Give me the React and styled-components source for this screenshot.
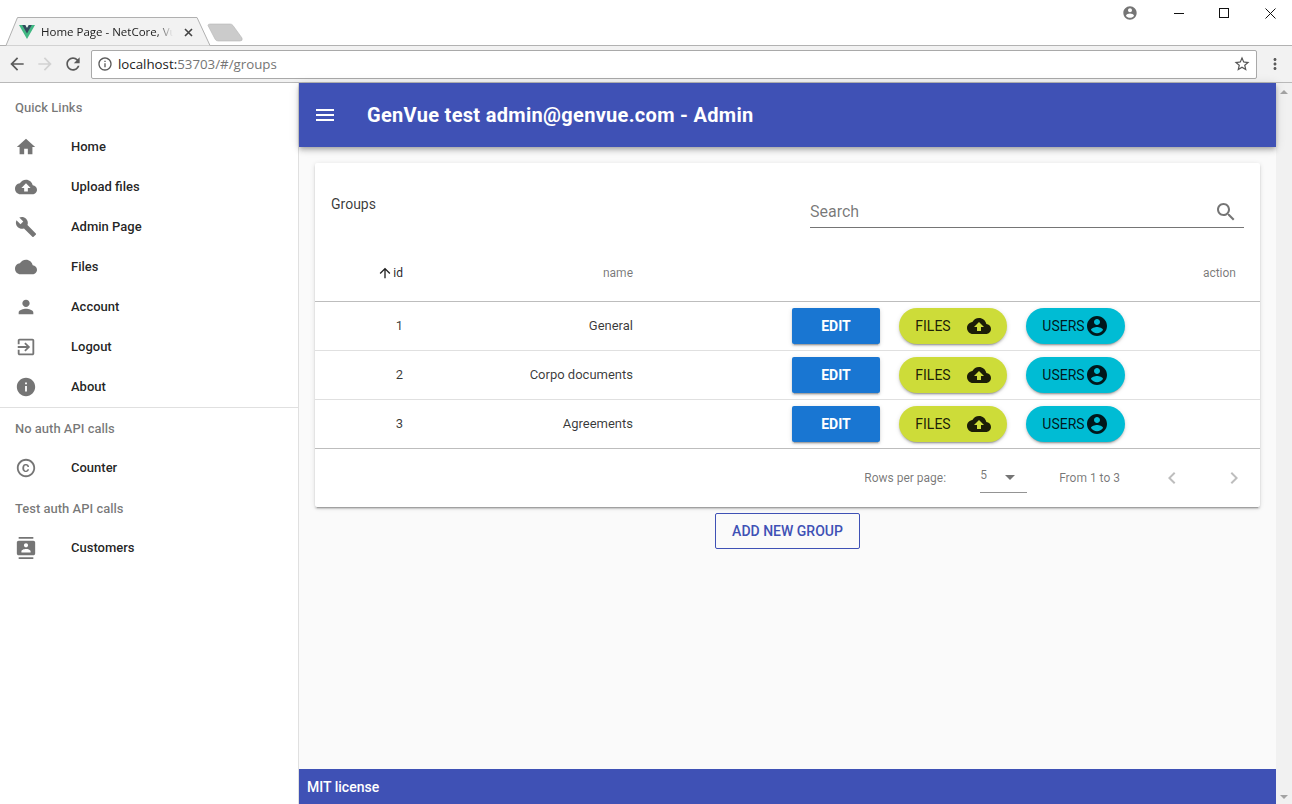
import React from 'react';
import styled, { createGlobalStyle } from 'styled-components';

const Global = createGlobalStyle`
  html, body { margin: 0; padding: 0; height: 100%; overflow: hidden; background: #fff; }
  body { font-family: Roboto, "Liberation Sans", sans-serif; }
  * { box-sizing: border-box; }
`;

const P = {
  home: 'M10 20v-6h4v6h5v-8h3L12 3 2 12h3v8z',
  upload: 'M19.35 10.04C18.67 6.59 15.64 4 12 4 9.11 4 6.6 5.64 5.35 8.04 2.34 8.36 0 10.91 0 14c0 3.31 2.69 6 6 6h13c2.76 0 5-2.24 5-5 0-2.64-2.05-4.78-4.65-4.96zM14 13v4h-4v-4H7l5-5 5 5h-3z',
  build: 'M22.7 19l-9.1-9.1c.9-2.3.4-5-1.5-6.9-2-2-5-2.4-7.4-1.3L9 6 6 9 1.6 4.7C.4 7.1.9 10.1 2.9 12.1c1.9 1.9 4.6 2.4 6.9 1.5l9.1 9.1c.4.4 1 .4 1.4 0l2.3-2.3c.5-.4.5-1.1.1-1.4z',
  cloud: 'M19.35 10.04C18.67 6.59 15.64 4 12 4 9.11 4 6.6 5.64 5.35 8.04 2.34 8.36 0 10.91 0 14c0 3.31 2.69 6 6 6h13c2.76 0 5-2.24 5-5 0-2.64-2.05-4.78-4.65-4.96z',
  person: 'M12 12c2.21 0 4-1.79 4-4s-1.79-4-4-4-4 1.79-4 4 1.79 4 4 4zm0 2c-2.67 0-8 1.34-8 4v2h16v-2c0-2.66-5.33-4-8-4z',
  exit: 'M10.09 15.59L11.5 17l5-5-5-5-1.41 1.41L12.67 11H3v2h9.67l-2.58 2.59zM19 3H5c-1.11 0-2 .9-2 2v4h2V5h14v14H5v-4H3v4c0 1.1.89 2 2 2h14c1.1 0 2-.9 2-2V5c0-1.1-.9-2-2-2z',
  info: 'M12 2C6.48 2 2 6.48 2 12s4.48 10 10 10 10-4.48 10-10S17.52 2 12 2zm1 15h-2v-6h2v6zm0-8h-2V7h2v2z',
  copyright: 'M10.08 10.86c.05-.33.16-.62.3-.87s.34-.46.59-.62c.24-.15.54-.22.91-.23.23.01.44.05.63.13.2.09.38.21.52.36s.25.33.34.53.13.42.14.64h1.79c-.02-.47-.11-.9-.28-1.29s-.4-.73-.7-1.01-.66-.5-1.08-.66-.88-.23-1.39-.23c-.65 0-1.22.11-1.7.34s-.88.53-1.2.92-.56.84-.71 1.36S8 11.29 8 11.87v.27c0 .58.08 1.12.23 1.64s.39.97.71 1.35.72.69 1.2.91 1.05.34 1.7.34c.47 0 .91-.08 1.32-.23s.77-.36 1.08-.63.56-.58.74-.94.29-.74.3-1.15h-1.79c-.01.21-.06.4-.15.58s-.21.33-.36.46-.32.23-.52.3c-.19.07-.39.09-.6.1-.36-.01-.66-.08-.89-.23-.25-.16-.45-.37-.59-.62s-.25-.55-.3-.88-.08-.67-.08-1v-.27c0-.35.03-.68.08-1.01zM12 2C6.48 2 2 6.48 2 12s4.48 10 10 10 10-4.48 10-10S17.52 2 12 2zm0 18c-4.41 0-8-3.59-8-8s3.59-8 8-8 8 3.59 8 8-3.59 8-8 8z',
  contacts: 'M20 0H4v2h16V0zM4 24h16v-2H4v2zM20 4H4c-1.1 0-2 .9-2 2v12c0 1.1.9 2 2 2h16c1.1 0 2-.9 2-2V6c0-1.1-.9-2-2-2zm-8 2.75c1.24 0 2.25 1.01 2.25 2.25s-1.01 2.25-2.25 2.25S9.75 10.24 9.75 9 10.76 6.75 12 6.75zM17 17H7v-1.5c0-1.67 3.33-2.5 5-2.5s5 .83 5 2.5V17z',
  account: 'M12 2C6.48 2 2 6.48 2 12s4.48 10 10 10 10-4.48 10-10S17.52 2 12 2zm0 3c1.66 0 3 1.34 3 3s-1.34 3-3 3-3-1.34-3-3 1.34-3 3-3zm0 14.2c-2.5 0-4.71-1.28-6-3.22.03-1.99 4-3.08 6-3.08 1.99 0 5.97 1.09 6 3.08-1.29 1.94-3.5 3.22-6 3.22z',
  search: 'M15.5 14h-.79l-.28-.27C15.41 12.59 16 11.11 16 9.5 16 5.91 13.09 3 9.5 3S3 5.91 3 9.5 5.91 16 9.5 16c1.61 0 3.09-.59 4.23-1.57l.27.28v.79l5 4.99L20.49 19l-4.99-5zm-6 0C7.01 14 5 11.99 5 9.5S7.01 5 9.5 5 14 7.01 14 9.5 11.99 14 9.5 14z',
  menu: 'M3 18h18v-2H3v2zm0-5h18v-2H3v2zm0-7v2h18V6H3z',
  arrowUp: 'M4 12l1.41 1.41L11 7.83V20h2V7.83l5.58 5.59L20 12l-8-8-8 8z',
  left: 'M15.41 7.41L14 6l-6 6 6 6 1.41-1.41L10.83 12z',
  right: 'M10 6L8.59 7.41 13.17 12l-4.58 4.59L10 18l6-6z',
  drop: 'M7 10l5 5 5-5z',
  back: 'M20 11H7.83l5.59-5.59L12 4l-8 8 8 8 1.41-1.41L7.83 13H20v-2z',
  forward: 'M12 4l-1.41 1.41L16.17 11H4v2h12.17l-5.58 5.59L12 20l8-8z',
  reload: 'M17.65 6.35C16.2 4.9 14.21 4 12 4c-4.42 0-7.99 3.58-7.99 8s3.57 8 7.99 8c3.73 0 6.84-2.55 7.73-6h-2.08c-.82 2.33-3.04 4-5.65 4-3.31 0-6-2.69-6-6s2.69-6 6-6c1.66 0 3.14.69 4.22 1.78L13 11h7V4l-2.35 2.35z',
  infoOutline: 'M11 7h2v2h-2zm0 4h2v6h-2zm1-9C6.48 2 2 6.48 2 12s4.48 10 10 10 10-4.48 10-10S17.52 2 12 2zm0 18c-4.41 0-8-3.59-8-8s3.59-8 8-8 8 3.59 8 8-3.59 8-8 8z',
  star: 'M22 9.24l-7.19-.62L12 2 9.19 8.63 2 9.24l5.46 4.73L5.82 21 12 17.27 18.18 21l-1.63-7.03L22 9.24zM12 15.4l-3.76 2.27 1-4.28-3.32-2.88 4.38-.38L12 6.1l1.71 4.04 4.38.38-3.32 2.88 1 4.28L12 15.4z',
  dots: 'M12 8c1.1 0 2-.9 2-2s-.9-2-2-2-2 .9-2 2 .9 2 2 2zm0 2c-1.1 0-2 .9-2 2s.9 2 2 2 2-.9 2-2-.9-2-2-2zm0 6c-1.1 0-2 .9-2 2s.9 2 2 2 2-.9 2-2-.9-2-2-2z',
};

const Icon = ({ d, size = 24, color = 'currentColor' }) => (
  <svg width={size} height={size} viewBox="0 0 24 24" fill={color} style={{ display: 'block', flex: 'none' }}>
    <path d={d} fillRule="evenodd" />
  </svg>
);

const Page = styled.div`
  width: 1292px;
  height: 804px;
  display: flex;
  flex-direction: column;
  overflow: hidden;
  background: #fff;
`;

/* ---------- browser chrome ---------- */
const TitleBar = styled.div`
  height: 46px;
  flex: none;
  position: relative;
  display: flex;
  align-items: flex-start;
  justify-content: flex-end;
  border-bottom: 1px solid #b2b2b2;
`;
const TabShape = styled.svg`
  position: absolute;
  left: 0;
  top: 16px;
`;
const TabContent = styled.div`
  position: absolute;
  left: 19px;
  top: 18px;
  width: 176px;
  height: 28px;
  display: flex;
  align-items: center;
`;
const TabTitle = styled.span`
  margin-left: 6px;
  width: 132px;
  flex: none;
  font: 11.5px/16px "Open Sans", "Noto Sans", sans-serif;
  color: #222;
  white-space: nowrap;
  -webkit-mask-image: linear-gradient(to right, #000 88%, transparent 100%);
  mask-image: linear-gradient(to right, #000 88%, transparent 100%);
`;
const TabClose = styled.svg`
  margin-left: 11px;
  flex: none;
`;
const WindowControls = styled.div`
  display: flex;
  align-items: center;
  height: 26px;
  padding-right: 16px;
`;
const UserBubble = styled.div`
  margin-right: 36px;
  color: #757575;
`;
const Win = styled.svg`
  display: block;
  margin-left: ${(p) => p.$gap}px;
`;
const Toolbar = styled.div`
  height: 37px;
  flex: none;
  background: #f2f2f2;
  border-bottom: 1px solid #b9b9b9;
  display: flex;
  align-items: center;
  padding-left: 8px;
`;
const NavIcon = styled.div`
  width: 28px;
  flex: none;
  display: flex;
  justify-content: center;
  margin-left: ${(p) => p.$ml || 0}px;
  color: ${(p) => p.$color || '#5a5a5a'};
`;
const Omnibox = styled.div`
  width: 1166px;
  flex: none;
  height: 29px;
  margin-left: 4px;
  background: #fff;
  border: 1px solid #a9a9a9;
  border-radius: 2px;
  display: flex;
  align-items: center;
  padding: 0 5px;
  color: #5a5a5a;
`;
const Url = styled.div`
  margin-left: 5px;
  flex: 1;
  font: 13.3px "Open Sans", "Noto Sans", sans-serif;
  color: #757575;
  span { color: #222; }
`;

/* ---------- app ---------- */
const Body = styled.div`
  flex: 1;
  min-height: 0;
  display: flex;
`;
const Sidebar = styled.nav`
  width: 299px;
  flex: none;
  background: #fff;
  border-right: 1px solid #e0e0e0;
  padding-top: 5px;
`;
const SubHeader = styled.div`
  height: ${(p) => p.$h}px;
  padding-top: ${(p) => p.$pt || 0}px;
  padding-left: 15px;
  display: flex;
  align-items: center;
  font-size: 13px;
  font-weight: 500;
  color: rgba(0, 0, 0, 0.54);
`;
const NavItem = styled.div`
  height: 40px;
  padding-left: 15px;
  display: flex;
  align-items: center;
  font-size: 13px;
  font-weight: 500;
  color: rgba(0, 0, 0, 0.87);
`;
const NavIconBox = styled.div`
  width: 56px;
  flex: none;
  padding-top: 2px;
  color: rgba(0, 0, 0, 0.54);
`;
const Divider = styled.div`
  height: 1px;
  margin-top: 1px;
  background: #e0e0e0;
`;
const Main = styled.main`
  flex: 1;
  min-width: 0;
  display: flex;
  flex-direction: column;
  background: #fafafa;
`;
const AppBar = styled.header`
  height: 64px;
  flex: none;
  background: #3f51b5;
  color: #fff;
  display: flex;
  align-items: center;
  padding-left: 14px;
  box-shadow: 0 2px 4px -1px rgba(0,0,0,.2), 0 4px 5px 0 rgba(0,0,0,.14), 0 1px 10px 0 rgba(0,0,0,.12);
  position: relative;
`;
const AppTitle = styled.h1`
  margin: 0 0 0 30px;
  font-size: 20px;
  font-weight: 700;
  letter-spacing: 0.31px;
`;
const Content = styled.div`
  flex: 1;
  padding: 16px 16px 0;
  display: flex;
  flex-direction: column;
  align-items: center;
`;
const Card = styled.section`
  width: 945px;
  height: 344px;
  background: #fff;
  border-radius: 2px;
  box-shadow: 0 3px 1px -2px rgba(0,0,0,.2), 0 2px 2px 0 rgba(0,0,0,.14), 0 1px 5px 0 rgba(0,0,0,.12);
  display: flex;
  flex-direction: column;
`;
const CardHead = styled.div`
  height: 80px;
  flex: none;
  display: flex;
  justify-content: space-between;
  padding: 0 16px;
`;
const CardTitle = styled.div`
  font-size: 14px;
  line-height: 20px;
  margin-top: 31px;
  color: rgba(0, 0, 0, 0.78);
`;
const SearchBox = styled.div`
  width: 434px;
  height: 33px;
  margin-top: 32px;
  border-bottom: 1px solid rgba(0, 0, 0, 0.54);
  display: flex;
  align-items: center;
  justify-content: space-between;
  padding-right: 6px;
  font-size: 16px;
  color: rgba(0, 0, 0, 0.54);
`;
const SearchIconBox = styled.div`
  padding-top: 2px;
`;
const Row = styled.div`
  display: grid;
  grid-template-columns: 88px 230px 1fr;
  height: ${(p) => p.$h}px;
  flex: none;
  align-items: center;
  border-bottom: 1px solid ${(p) => p.$line || '#e0e0e0'};
  font-size: 13px;
  color: rgba(0, 0, 0, 0.78);
`;
const HeadRow = styled(Row)`
  font-size: 12px;
  color: rgba(0, 0, 0, 0.54);
  padding-top: 1px;
`;
const Cell = styled.div`
  text-align: right;
  position: relative;
  top: ${(p) => (p.$body ? -1 : 0)}px;
`;
const SortCell = styled.div`
  display: flex;
  justify-content: flex-end;
  align-items: center;
  color: rgba(0, 0, 0, 0.87);
`;
const ActionHead = styled.div`
  text-align: right;
  padding-right: 24px;
`;
const Actions = styled.div`
  display: flex;
  gap: 19px;
  padding-left: 159px;
`;
const ActionBtn = styled.button`
  width: ${(p) => p.$w}px;
  height: 36px;
  border: 0;
  padding: 0;
  background: ${(p) => p.$bg};
  color: ${(p) => p.$fg};
  border-radius: ${(p) => p.$radius}px;
  font: ${(p) => p.$weight} 14px Roboto, sans-serif;
  display: flex;
  align-items: center;
  justify-content: center;
  gap: ${(p) => p.$gap || 0}px;
  box-shadow: 0 3px 1px -2px rgba(0,0,0,.2), 0 2px 2px 0 rgba(0,0,0,.14), 0 1px 5px 0 rgba(0,0,0,.12);
`;
const Pager = styled.div`
  flex: 1;
  display: flex;
  align-items: center;
  justify-content: flex-end;
  font-size: 12px;
  color: rgba(0, 0, 0, 0.54);
  padding-right: 14px;
  padding-bottom: 1px;
`;
const RowsSelect = styled.div`
  width: 47px;
  height: 30px;
  margin: 1px 32px 0 34px;
  border-bottom: 1px solid rgba(0, 0, 0, 0.42);
  display: flex;
  justify-content: space-between;
  align-items: flex-start;
  padding-top: 5px;
`;
const SelectCaret = styled.div`
  margin: -3px 5px 0 0;
`;
const PagerNav = styled.div`
  color: rgba(0, 0, 0, 0.26);
  margin-left: ${(p) => p.$ml}px;
`;
const AddBtn = styled.button`
  width: 145px;
  height: 36px;
  margin-top: 6px;
  flex: none;
  background: transparent;
  border: 1px solid #3f51b5;
  border-radius: 2px;
  color: #3f51b5;
  font: 500 14px Roboto, sans-serif;
  padding: 0;
`;
const Foot = styled.footer`
  height: 35px;
  flex: none;
  background: #3f51b5;
  color: #fff;
  font-size: 14px;
  font-weight: 500;
  display: flex;
  align-items: center;
  padding-left: 8px;
`;
const Scrollbar = styled.div`
  width: 16px;
  flex: none;
  background: #f1f1f1;
  display: flex;
  flex-direction: column;
  justify-content: space-between;
  align-items: center;
  padding: 7px 0 5px;
`;
const Arrow = styled.div`
  width: 0;
  height: 0;
  border-left: 4px solid transparent;
  border-right: 4px solid transparent;
  ${(p) => (p.$up ? 'border-bottom: 4px solid #a3a3a3;' : 'border-top: 4px solid #a3a3a3;')}
`;

const top = [
  ['Home', P.home], ['Upload files', P.upload], ['Admin Page', P.build], ['Files', P.cloud],
  ['Account', P.person], ['Logout', P.exit], ['About', P.info],
];
const rows = [[1, 'General'], [2, 'Corpo documents'], [3, 'Agreements']];

const Nav = ({ label, d }) => (
  <NavItem><NavIconBox><Icon d={d} size={22} /></NavIconBox>{label}</NavItem>
);

export default function App() {
  return (
    <Page>
      <Global />
      <TitleBar>
        <TabShape width="246" height="30" viewBox="0 0 246 30">
          <path d="M0 29.5H6L17.500 1.5H197L210 29.5" fill="#f2f2f2" stroke="#b0b0b0" />
          <path d="M208 9.500Q208 8 210 8H230Q232 8 233 9.500L242 22Q243 25 240 25H218Q216 25 215 23Z" fill="#cbcbcb" stroke="#b5b5b5" strokeWidth="0.6" />
        </TabShape>
        <TabContent>
          <svg width="16" height="14" viewBox="0 0 261.76 226.69" style={{ flex: 'none' }}>
            <path d="M161.1 0L130.9 52.3 100.7 0H0l130.9 226.7L261.8 0z" fill="#41b883" />
            <path d="M161.1 0L130.9 52.3 100.7 0H52.4l78.5 136L209.4 0z" fill="#34495e" />
          </svg>
          <TabTitle>Home Page - NetCore, Vu</TabTitle>
          <TabClose width="9" height="9" viewBox="0 0 9 9">
            <path d="M1 1l7 7M8 1L1 8" stroke="#444" strokeWidth="1.6" />
          </TabClose>
        </TabContent>
        <WindowControls>
          <UserBubble><Icon d={P.account} size={16} /></UserBubble>
          <Win $gap={0} width="10" height="10" viewBox="0 0 10 10"><path d="M0 5.500h10" stroke="#111" /></Win>
          <Win $gap={35} width="10" height="10" viewBox="0 0 10 10"><rect x=".5" y=".5" width="9" height="9" fill="none" stroke="#111" /></Win>
          <Win $gap={36} width="11" height="11" viewBox="0 0 11 11"><path d="M.5.5l10 10M10.500.5l-10 10" stroke="#111" /></Win>
        </WindowControls>
      </TitleBar>
      <Toolbar>
        <NavIcon $ml={-5}><Icon d={P.back} size={20} /></NavIcon>
        <NavIcon><Icon d={P.forward} size={20} color="#d2d2d2" /></NavIcon>
        <NavIcon><Icon d={P.reload} size={20} /></NavIcon>
        <Omnibox>
          <Icon d={P.infoOutline} size={16} />
          <Url><span>localhost:</span>53703/#/groups</Url>
          <Icon d={P.star} size={18} color="#555" />
        </Omnibox>
        <NavIcon $ml={4}><Icon d={P.dots} size={18} /></NavIcon>
      </Toolbar>
      <Body>
        <Sidebar>
          <SubHeader $h={38}>Quick Links</SubHeader>
          {top.map(([l, d]) => <Nav key={l} label={l} d={d} />)}
          <Divider />
          <SubHeader $h={39} $pt={1}>No auth API calls</SubHeader>
          <Nav label="Counter" d={P.copyright} />
          <SubHeader $h={40} $pt={2}>Test auth API calls</SubHeader>
          <Nav label="Customers" d={P.contacts} />
        </Sidebar>
        <Main>
          <AppBar>
            <Icon d={P.menu} />
            <AppTitle>GenVue test admin@genvue.com - Admin</AppTitle>
          </AppBar>
          <Content>
            <Card>
              <CardHead>
                <CardTitle>Groups</CardTitle>
                <SearchBox>Search<SearchIconBox><Icon d={P.search} color="rgba(0,0,0,.54)" /></SearchIconBox></SearchBox>
              </CardHead>
              <HeadRow $h={59} $line="#bdbdbd">
                <SortCell><Icon d={P.arrowUp} size={16} />id</SortCell>
                <Cell>name</Cell>
                <ActionHead>action</ActionHead>
              </HeadRow>
              {rows.map(([id, name], i) => (
                <Row key={id} $h={49} $line={i === 2 ? '#bdbdbd' : '#e0e0e0'}>
                  <Cell $body>{id}</Cell>
                  <Cell $body>{name}</Cell>
                  <Actions>
                    <ActionBtn $w={88} $bg="#1976d2" $fg="#fff" $radius={2} $weight={700}>EDIT</ActionBtn>
                    <ActionBtn $w={108} $bg="#cddc39" $fg="rgba(0,0,0,.87)" $radius={18} $weight={400} $gap={16}>
                      FILES<Icon d={P.upload} />
                    </ActionBtn>
                    <ActionBtn $w={99} $bg="#00bcd4" $fg="rgba(0,0,0,.87)" $radius={18} $weight={400}>
                      USERS<Icon d={P.account} />
                    </ActionBtn>
                  </Actions>
                </Row>
              ))}
              <Pager>
                Rows per page:
                <RowsSelect>5<SelectCaret><Icon d={P.drop} /></SelectCaret></RowsSelect>
                From 1 to 3
                <PagerNav $ml={40}><Icon d={P.left} /></PagerNav>
                <PagerNav $ml={38}><Icon d={P.right} /></PagerNav>
              </Pager>
            </Card>
            <AddBtn>ADD NEW GROUP</AddBtn>
          </Content>
          <Foot>MIT license</Foot>
        </Main>
        <Scrollbar><Arrow $up /><Arrow /></Scrollbar>
      </Body>
    </Page>
  );
}
